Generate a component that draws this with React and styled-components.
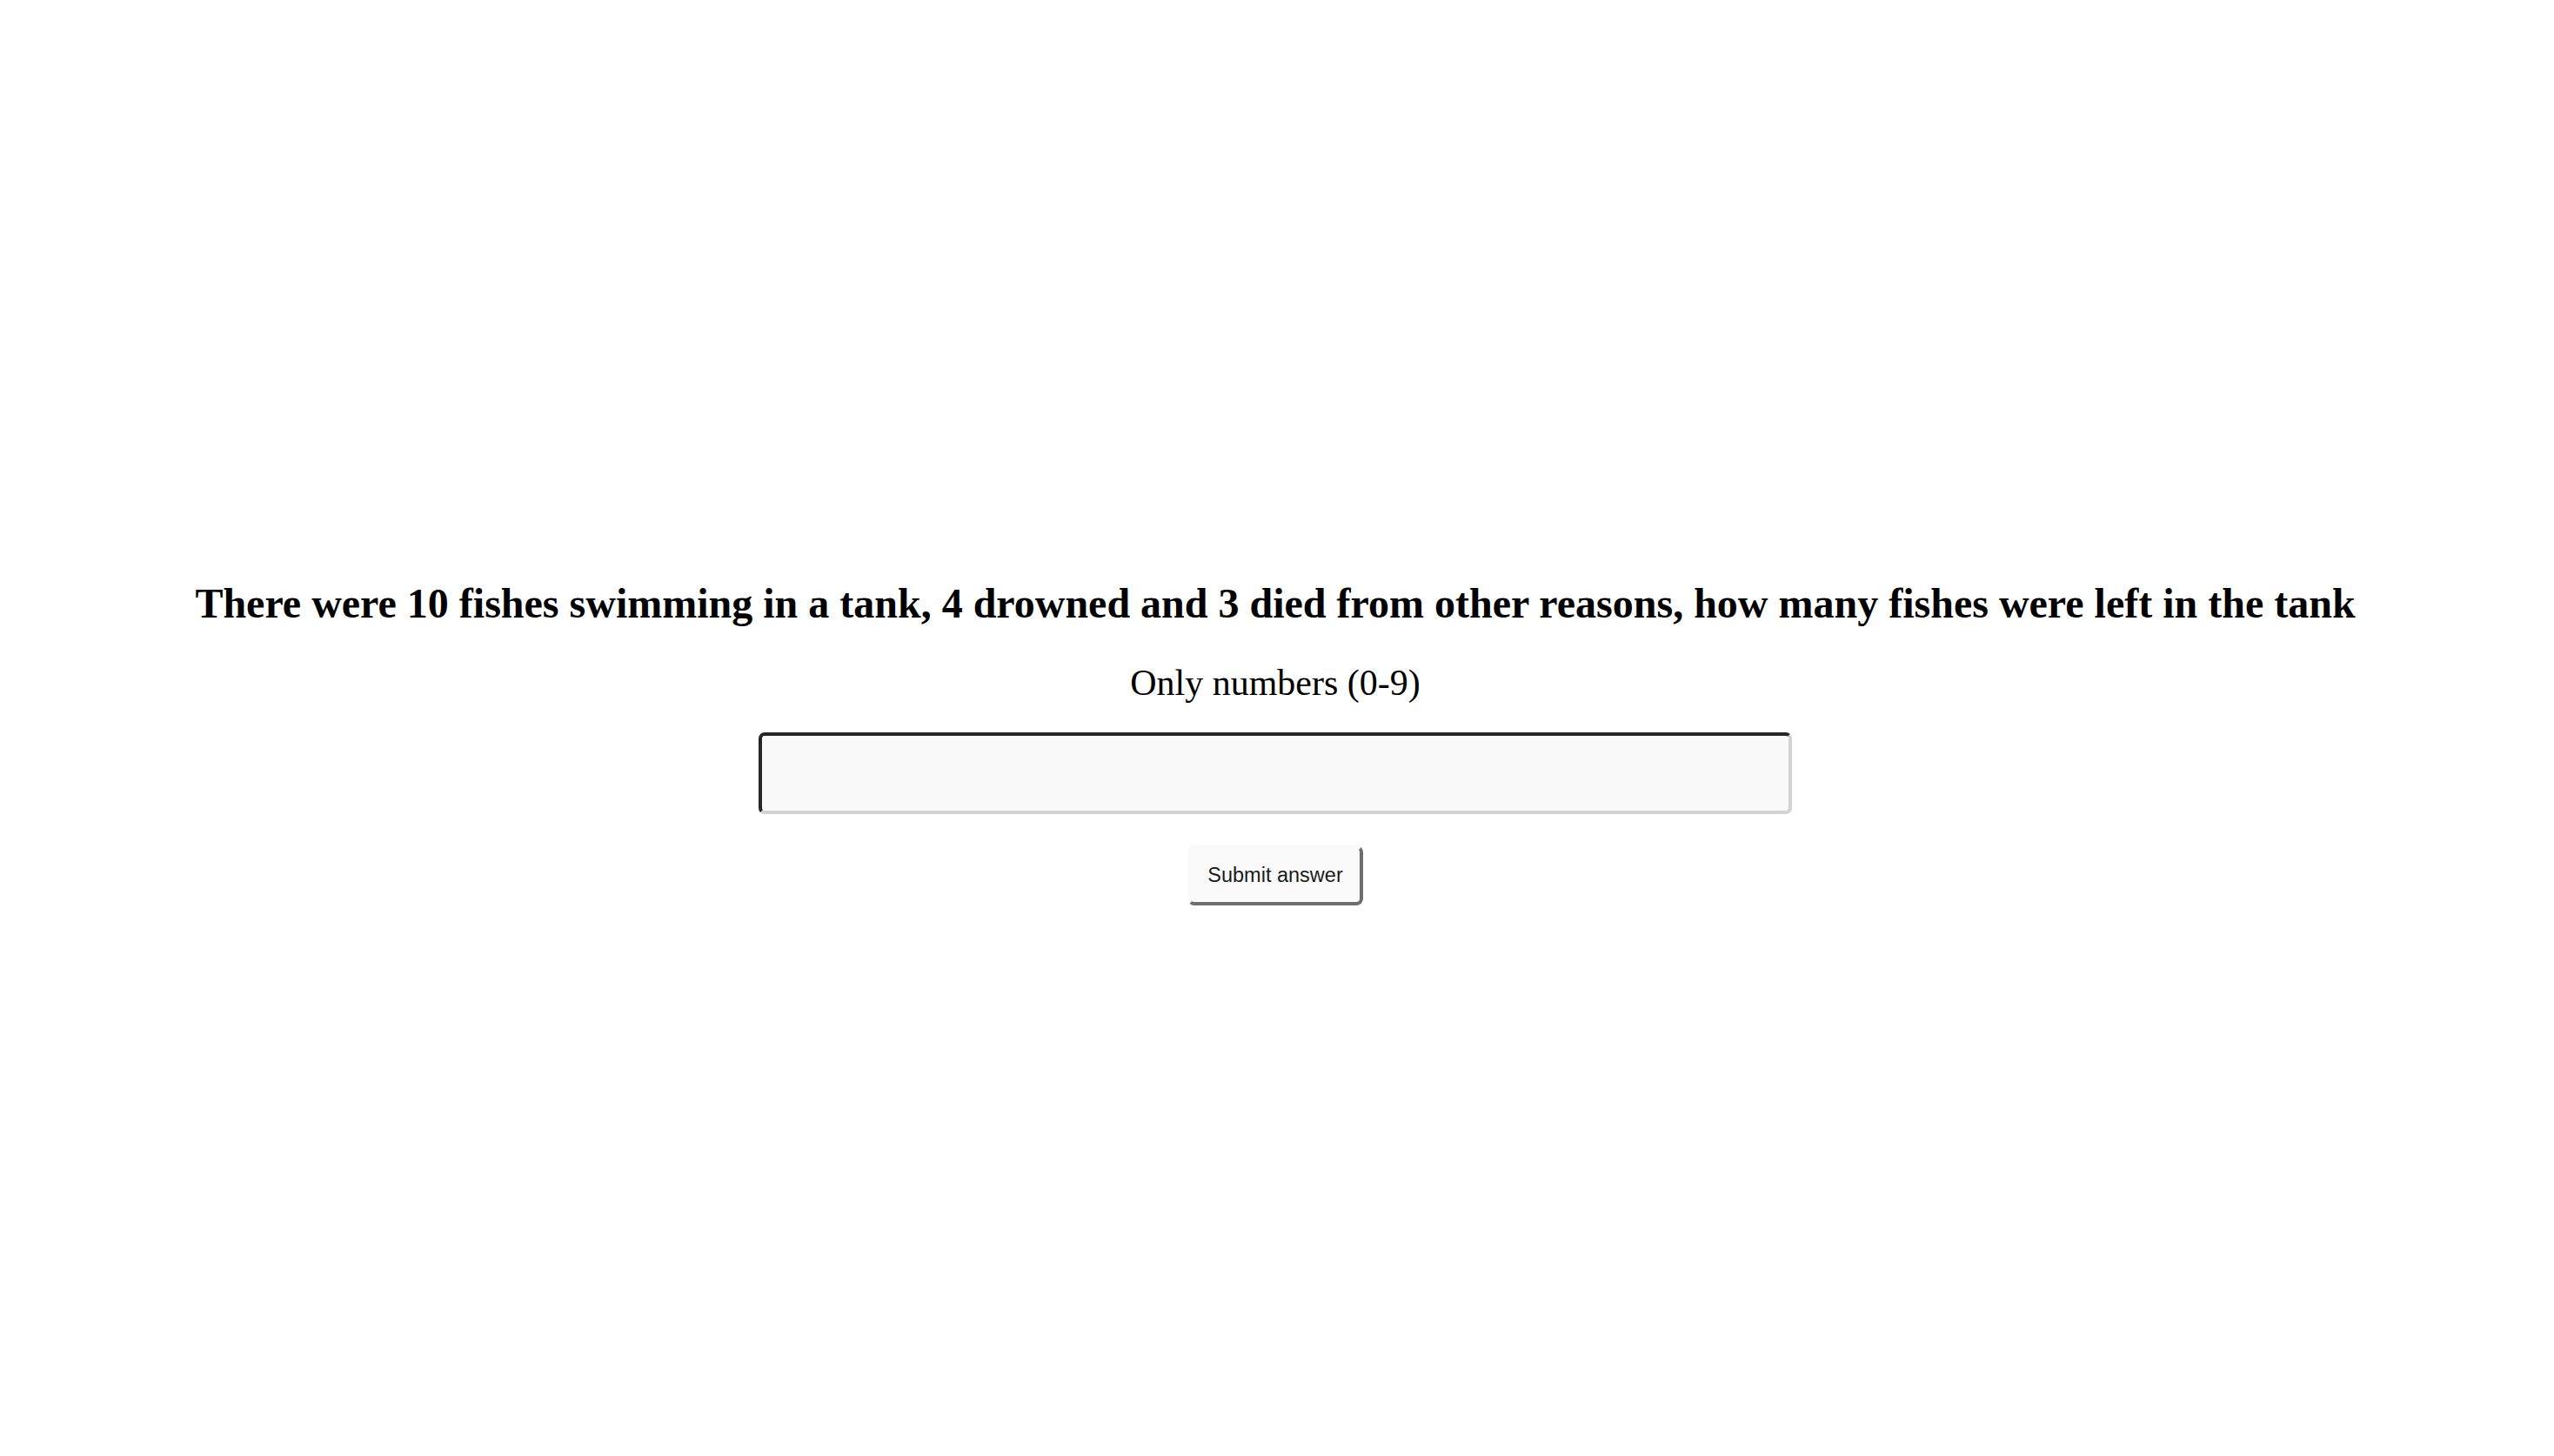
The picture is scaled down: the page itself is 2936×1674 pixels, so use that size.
import styled, { createGlobalStyle } from 'styled-components';

const GlobalStyle = createGlobalStyle`
  html, body {
    margin: 0;
    padding: 0;
    background: #ffffff;
  }
  body {
    font-family: "Liberation Serif", "Times New Roman", serif;
    color: #000;
  }
`;

const Page = styled.main`
  min-height: 100vh;
  box-sizing: border-box;
  padding-top: 34px;
  padding-right: 4px;
  display: flex;
  flex-direction: column;
  align-items: center;
  justify-content: center;
`;

const Question = styled.h2`
  margin: 0;
  font-size: 48px;
  font-weight: bold;
  line-height: 54px;
  text-align: center;
`;

const Hint = styled.p`
  margin: 41px 0 0;
  font-size: 42px;
  line-height: 47px;
`;

const AnswerInput = styled.input`
  margin-top: 33px;
  width: 1188px;
  height: 94px;
  box-sizing: border-box;
  border-width: 4px;
  border-style: solid;
  border-color: #262626 #d3d3d3 #d3d3d3 #262626;
  border-radius: 7px;
  background: #f9f9f9;
  font-size: 36px;
  padding: 0 12px;
  outline: none;
`;

const SubmitButton = styled.button`
  margin-top: 36px;
  height: 69px;
  padding: 0 19px;
  box-sizing: border-box;
  border-width: 4px;
  border-style: solid;
  border-color: #fafafa #6e6e6e #6e6e6e #fafafa;
  border-radius: 8px;
  background: #fafafa;
  color: #1a1a1a;
  font-family: "Liberation Sans", Arial, sans-serif;
  font-size: 23.5px;
  cursor: pointer;
`;

export default function App() {
  return (
    <>
      <GlobalStyle />
      <Page>
        <Question>
          There were 10 fishes swimming in a tank, 4 drowned and 3 died from other reasons, how many fishes were left in the tank
        </Question>
        <Hint>Only numbers (0-9)</Hint>
        <AnswerInput type="text" />
        <SubmitButton>Submit answer</SubmitButton>
      </Page>
    </>
  );
}
